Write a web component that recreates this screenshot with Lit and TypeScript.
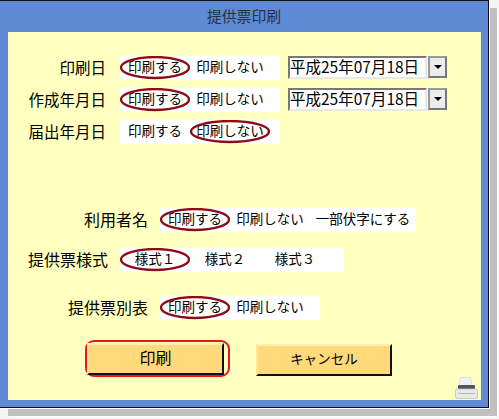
import { LitElement, html, css, svg } from "lit";
import { customElement } from "lit/decorators.js";

type Opt = { text: string; on?: boolean; w: number };

@customElement("app-root")
export class AppRoot extends LitElement {
  static styles = css`
    :host { display: block; width: 499px; height: 419px; background: #f4f4f4; overflow: hidden;
      font-family: "Noto Sans CJK JP", "DejaVu Sans", sans-serif; color: #000; }
    .panel { width: 489px; height: 408px; box-sizing: border-box; background: #5f89d2;
      border-top: 1px solid #111; border-bottom: 1px solid #111; border-right: 1px solid #111;
      padding: 0 7px 7px 8px; display: flex; flex-direction: column;
      box-shadow: 1px 1px 0 #fff, 8px 8px 0 #c0c0c0, 9px 9px 0 #fff; }
    .title { height: 31px; flex: none; display: flex; align-items: center; justify-content: center;
      font-size: 14.8px; color: #26304a; padding: 0 1px 3px 0; box-sizing: border-box; }
    .body { flex: 1; background: #ffffc0; position: relative; padding-top: 24px; box-sizing: border-box; }
    .row { display: flex; align-items: center; height: 24px; }
    .r2, .r3 { margin-top: 8px; }
    .r4 { margin-top: 64px; }
    .r5 { margin-top: 16px; }
    .r6 { margin-top: 24px; }
    .label { box-sizing: border-box; flex: none; text-align: right; font-size: 16px; white-space: nowrap; padding-bottom: 3px; }
    .l-a { width: 112px; padding-right: 14px; font-size: 15.5px; }
    .l-b { width: 152px; padding-right: 12px; }
    .l-c { width: 112px; padding-right: 12px; }
    .opts { display: flex; background: #fff; height: 24px; }
    .opt { position: relative; display: flex; align-items: center; justify-content: center;
      font-size: 13.5px; white-space: nowrap; box-sizing: border-box; padding-bottom: 4px; }
    .ring { position: absolute; left: 0; top: 0; }
    .fill { flex: none; }
    .date { display: flex; margin-left: 8px; height: 24px; }
    .field { box-sizing: border-box; width: 139px; height: 23px; background: #fff; font-size: 15.5px;
      border: 2px solid; border-color: #777 #e8e8e8 #e8e8e8 #777; line-height: 17px; white-space: nowrap; overflow: hidden; }
    .drop { box-sizing: border-box; width: 19px; height: 22px; margin-left: 1px; background: #ececec;
      border: 2px solid; border-color: #999 #777 #777 #999; display: flex; align-items: center; justify-content: center; }
    .arrow { width: 0; height: 0; border: 4px solid transparent; border-top: 4px solid #000; border-bottom: 0; }
    .buttons { display: flex; margin-top: 20px; padding-left: 77px; align-items: flex-start; }
    .hot { box-sizing: border-box; width: 145px; height: 37px; border: 2px solid #f01414; border-radius: 9px;
      padding: 1px 0 0 0; margin-right: 26px; flex: none; }
    .btn { box-sizing: border-box; height: 32px; background: #ffd97a;
      display: flex; align-items: center; justify-content: center; padding-bottom: 4px;
      border-top: 2px solid #ffeeb0; border-left: 2px solid #ffe59a; border-right: 2px solid #111; border-bottom: 2px solid #111; }
    .b1 { width: 137px; font-size: 16px; }
    .b2 { width: 136px; font-size: 13.5px; margin-top: 4px; }
    .printer { position: absolute; right: 3px; bottom: 1px; display: block; }
  `;

  private ring(w: number) {
    const rx = w / 2 - 1;
    return svg`<svg class="ring" width=${w} height="24" viewBox="0 0 ${w} 24"><ellipse cx=${w / 2} cy="11.5" rx=${rx} ry="10.5" fill="none" stroke="#8b0e16" stroke-width="2.3"/></svg>`;
  }

  private opts(list: Opt[], fill = 0) {
    return html`<div class="opts">
      ${list.map(
        (o) => html`<div class="opt" style="width:${o.w}px">${o.text}${o.on ? this.ring(o.w) : ""}</div>`
      )}
      ${fill ? html`<div class="fill" style="width:${fill}px"></div>` : ""}
    </div>`;
  }

  private date() {
    return html`<div class="date">
      <div class="field">平成25年07月18日</div>
      <div class="drop"><span class="arrow"></span></div>
    </div>`;
  }

  render() {
    const print: Opt[] = [{ text: "印刷する", on: true, w: 70 }, { text: "印刷しない", w: 80 }];
    return html`<div class="panel">
      <div class="title">提供票印刷</div>
      <div class="body">
        <div class="row"><div class="label l-a">印刷日</div>
          ${this.opts(print, 10)}${this.date()}</div>
        <div class="row r2"><div class="label l-a">作成年月日</div>
          ${this.opts(print, 10)}${this.date()}</div>
        <div class="row r3"><div class="label l-a">届出年月日</div>
          ${this.opts([{ text: "印刷する", w: 70 }, { text: "印刷しない", on: true, w: 80 }], 10)}</div>
        <div class="row r4"><div class="label l-b">利用者名</div>
          ${this.opts([...print, { text: "一部伏字にする", w: 106 }])}</div>
        <div class="row r5"><div class="label l-c">提供票様式</div>
          ${this.opts([{ text: "様式１", on: true, w: 70 }, { text: "様式２", w: 70 }, { text: "様式３", w: 70 }], 14)}</div>
        <div class="row r6"><div class="label l-b">提供票別表</div>
          ${this.opts(print, 10)}</div>
        <div class="buttons">
          <div class="hot"><div class="btn b1">印刷</div></div>
          <div class="btn b2">キャンセル</div>
        </div>
        <svg class="printer" width="23" height="22" viewBox="0 0 23 22">
          <path d="M5.5 0.5h10l1.5 8H4z" fill="#eef2f8" stroke="#d4d8de" stroke-width=".8"/>
          <rect x="3" y="8" width="17" height="4" rx="1" fill="#50535a"/>
          <rect x="0.5" y="12" width="22" height="9.5" rx="1.5" fill="#e8eaea" stroke="#c0c2c4" stroke-width=".8"/>
          <rect x="3" y="16" width="17" height="1" fill="#b4b6b8"/>
        </svg>
      </div>
    </div>`;
  }
}
